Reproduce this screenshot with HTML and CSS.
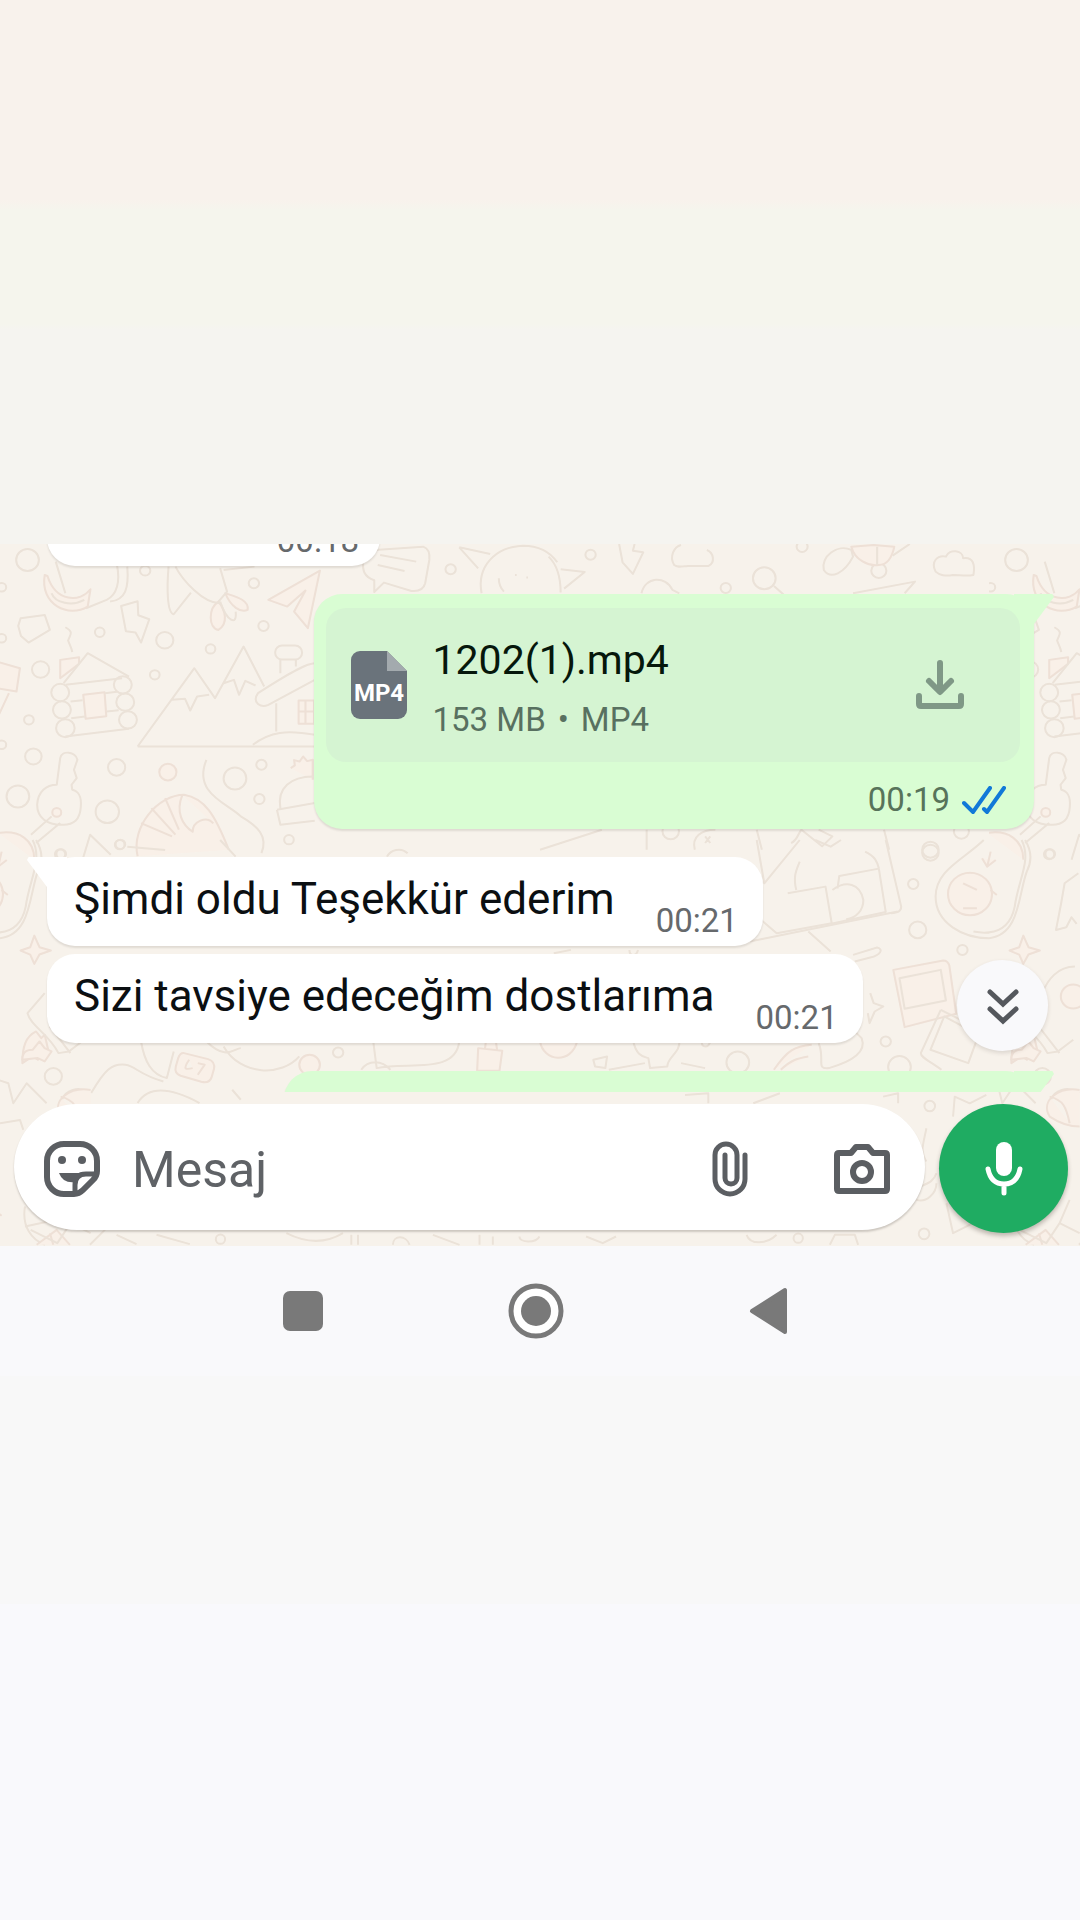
FILE: index.html
```html
<!DOCTYPE html>
<html lang="tr">
<head>
  <meta charset="UTF-8">
  <meta name="viewport" content="width=device-width, initial-scale=1.0">
  <title>Sohbet</title>
  <link rel="stylesheet" href="styles.css">
</head>
<body>
  <div class="top-space"></div>

  <main class="chat">
    <!-- Doodle wallpaper, repeats sideways -->
    <svg class="wallpaper" aria-hidden="true">
      <defs>
        <g id="doodles">
          <g transform="translate(0 -14) scale(.344 .333)">
            <circle cx="80" cy="90" r="33"/><circle cx="5" cy="172" r="13"/><circle cx="422" cy="122" r="15"/>
            <circle cx="738" cy="160" r="15"/><circle cx="766" cy="288" r="15"/><circle cx="290" cy="307" r="14"/>
            <circle cx="479" cy="331" r="25"/><circle cx="612" cy="357" r="14"/><circle cx="118" cy="419" r="25"/>
            <circle cx="450" cy="435" r="14"/><circle cx="5" cy="325" r="13"/><circle cx="84" cy="570" r="14"/>
            <circle cx="97" cy="680" r="24"/><circle cx="339" cy="713" r="25"/><circle cx="488" cy="727" r="25" class="warm"/>
            <circle cx="683" cy="746" r="33"/><circle cx="760" cy="705" r="15"/><circle cx="754" cy="808" r="15"/>
            <circle cx="52" cy="800" r="33"/><circle cx="312" cy="846" r="34"/><circle cx="840" cy="930" r="14"/>
            <circle cx="350" cy="944" r="14"/><circle cx="5" cy="645" r="13"/><circle cx="1310" cy="118" r="15"/>
            <path d="M162 95l28 95M340 105c10 50 0 90-30 105l-60 25M370 110c5 65-5 100-50 105"/>
            <path class="warm" d="M130 135c-15 90 70 130 125 95l8-52c-30 40-100 40-125-40z"/>
            <path d="M150 190c10 30 60 40 95 20M60 265l70-10 15 45-62 38-22-20-8-30z"/>
            <path d="M352 228l48-14 2 42 32 12-24 70-16-30-28-4z"/>
            <path class="warm" d="M635 215c-30 20-30 80 0 85 30-20 20-60 0-85zM655 190c30 10 70 20 65 50-20 10-50-10-65-50z"/>
            <path d="M490 110c-5 60-5 140 15 143l50-65M510 110c20 40 80 110 130 110M640 115l20 70-25 30M650 120l90-10M640 215c20 60 50 75 45 30"/>
            <path class="warm" d="M780 210L930 122 895 295 855 245 888 182 835 230z"/>
            <path d="M1090 60l140-10c15 5 20 20 18 40l-12 70c-5 20-20 25-40 23l-80-25-28 28v-35c-30-10-35-30-32-60zM1105 75l105 20M1098 105l78 18"/>
            <path d="M1400 190c-15-80 40-140 120-143 50 0 80 20 100 50M1335 52l90 20M1335 52l55 63M1450 145c0 20 5 30 15 40M1497 135h5M1530 143h5"/>
            <path d="M190 292c25 15 15 20 8 40 5 15 10 20 12 35"/>
            <path class="warm" d="M175 445v-55l55-8 0 20zM242 495l62-8 5 72-60 8z"/>
            <path d="M185 460l70-90 120 70M190 465l165-20M190 620l185-23M205 515l35-4M305 490l35-4M207 565l40-5M310 545l35-4"/>
            <circle cx="175" cy="488" r="26"/><circle cx="180" cy="540" r="26"/><circle cx="190" cy="595" r="27"/>
            <circle cx="357" cy="465" r="26"/><circle cx="364" cy="517" r="26"/><circle cx="372" cy="570" r="26"/>
            <path class="warm" d="M-10 395l68 20-10 70-58-10M-10 570l36-80"/>
            <path d="M400 650L565 415l60 90 83-155 60 120M400 650h520M500 510l38-3 15 35 20-42 35-5M650 460l30-10 15 45 18-42 30 14"/>
            <rect x="800" y="347" width="78" height="42" rx="20"/>
            <path d="M815 390v40M860 390v20M915 400c-20 0-60 20-165 90-20 30 10 45 30 35l135-75M803 520v85M735 645c50-40 100-45 180-30"/>
            <path class="warm" d="M868 512h45v70h-45zM868 545h45M888 512v70"/>
            <path d="M165 765l10-80c5-25 45-20 50 5l-10 30 8 25-15 20 2 15c20 5 27 20 25 50-2 40-20 57-57 55-40 0-70-20-70-60 2-40 27-60 57-60zM150 860l-60 55M175 880l-70 60"/>
            <circle cx="165" cy="848" r="13" class="warm"/>
            <path class="warm" d="M-5 910c60-10 105 20 105 80"/>
            <path d="M240 990l22-75 60 60"/>
            <path class="warm" d="M400 980c-20-90 60-185 135-185 60 10 90 60 130 165M410 880l90 40M440 835l70 80M480 805l40 95M530 796c-20 50 0 90 30 110 0-30 40-50 60-25"/>
            <path d="M600 690c-40 100 60 130 100 170 50 30 80 60 60 110"/>
            <path class="warm" d="M845 715l12-8-2-16 16 4 10-15 12 14 16-4v60"/>
            <path d="M815 835c-10-60 30-95 95-95M805 840l110-20M805 840l10 45 100-12"/>
          </g>

          <g transform="translate(540 -14) scale(.344 .333)">
            <circle cx="147" cy="74" r="15"/><circle cx="762" cy="50" r="16"/><circle cx="540" cy="174" r="15"/>
            <circle cx="652" cy="145" r="33"/><circle cx="985" cy="122" r="22"/><circle cx="380" cy="905" r="24"/>
            <circle cx="1225" cy="905" r="22"/><circle cx="1135" cy="960" r="24"/>
            <path d="M680 168l28 26M25 80c30 30 35 70 35 108M60 118l70 8-60 50M230 42l10 55 30 35 30-65-30-5 5-20"/>
            <path d="M410 45c-20 5-35 35-20 60 10 8 20 5 40 3h60c20-10 15-40-5-48M295 190c10-50 70-55 90-10l20 10"/>
            <path d="M1150 125c-15-30 5-50 30-45 10-25 50-20 50 5 30-5 35 20 30 50-20 5-40 0-60 0-20 5-40 0-50-10z"/>
            <path d="M905 60c-40-20-90 20-80 60 20 30 60 10 85-40z"/>
            <path class="warm" d="M905 50c10 40 50 60 80 55 30 0 40-30 45-55l-60-5z"/>
            <path d="M980 50v55M1075 42l-50 35M910 190l180-35-30 35"/>
            <path d="M0 960l180-60M310 900v60M450 960c-10-40 20-60 60-60M480 920l15 20M495 920l-15 20M630 900l15 60M730 940c20-10 20-30 30-40l60 50 30-30-40-20M1000 900l15 60"/>
          </g>

          <g transform="translate(0 296) scale(.344 .333)">
            <circle cx="155" cy="710" r="25"/><circle cx="983" cy="638" r="15"/><circle cx="348" cy="14" r="14"/>
            <circle cx="178" cy="42" r="14"/><circle cx="900" cy="675" r="30" class="warm"/>
            <path d="M370 20l110 10M640 0l45 50M1125 50c10-20 40-30 60-10"/>
            <path d="M410 605c10 60 30 100 75 110l20-80M265 760c40-70 60-90 100-85 30 5 40 30 110 50M600 605c60 60 80 20 100 20M650 620c50 90 170 90 220 30M180 780c10-30 50-40 70-25M400 790c30-50 90-50 180 0"/>
            <path class="warm" d="M535 640l70 18c15 5 20 15 17 30l-7 25c-5 15-15 17-30 13l-60-18c-13-5-17-15-14-28l7-25c4-12 8-16 17-15zM550 660c-20 30-10 30 10 25M575 670l20 5-20 30"/>
            <path class="warm" d="M1390 625l70 8-8 60h-65zM1410 625l3-25h28l4 30"/>
            <path d="M1085 605l10 80c90-20 230 20 240-80M1050 690c20-30 60-30 85 0M675 750l25 30"/>
            <path class="warm" d="M65 670c0-50 10-80 40-95l15 20 10-10 10 45-30 30-15-10z"/>
            <path d="M130 460l-50 60c10 40 60 60 90 120l30-5 45-35"/>
          </g>

          <g transform="translate(540 296) scale(.344 .333)">
            <circle cx="1135" cy="38" r="24"/><circle cx="1085" cy="132" r="15"/><circle cx="1098" cy="270" r="25"/>
            <circle cx="1228" cy="330" r="15"/><circle cx="575" cy="668" r="33"/><circle cx="1005" cy="605" r="15"/>
            <circle cx="1045" cy="682" r="33"/><circle cx="1480" cy="43" r="15"/><circle cx="1550" cy="470" r="36" class="warm"/>
            <path d="M1290 0c-60 60-140 90-140 170 0 80 80 125 155 125 90-10 85-130 110-200 20-40 10-70-5-95M1400 0c30 60-10 120-20 200-10 50-40 90-120 75"/>
            <circle cx="1250" cy="162" r="64" class="warm"/>
            <path class="warm" d="M1285 55l15 25 25-20M1300 80l10-45M1230 130l40 20M1230 205h40M1310 150l18 15"/>
            <path d="M630 0l22 130L755 0M745 150c-10-40 0-60 10-85M720 160l110-20 18 110-160 30-45-40M865 145l5-37 115-22 20 130-155 35M850 150c40-30 80-20 90 30 0 30-20 55-50 58M945 35c30 15 35 30 40 50M1005 0l45 200c0 15-10 18-30 20M800 0l45 20 30-20"/>
            <path d="M610 305l430-90M780 275l65 60M910 345l70-22c20 5 10 22-20 30l-45 12M40 340l50-10M260 330c0 20 20 20 25 0"/>
            <path class="warm" d="M1405 287l15 35 33 10-33 12-15 28-12-28-28-12 28-10z"/>
            <path d="M960 460l10 30 28 10-25 15-15 35-5-30"/>
            <path class="warm" d="M1027 390l145-28c10 0 15 5 18 15l20 145-150 40z"/>
            <path d="M1045 415l120-25 15 92-120 25zM1175 530l100 55-30 85-110-40z"/>
            <path d="M1165 510l-58 130c0 15 30 25 60 50M1165 510l125 65M1565 100l-40 30-10 60-15 80 30-8 15-30 15 20M1555 380c-50 0-80 40-95 80M1450 560l60 80"/>
            <path class="warm" d="M1370 660c0-30 20-30 30-30l20-25 15 20 20 10-20 30-20-10zM0 605c10 60 90 70 108 0"/>
            <path d="M270 600c10 50 30 50 45 55l5 30 50-5c0-30 40-40 35-80M200 690l105-20M410 670l70 15M155 660l40-10-5 35-30-5zM470 605c0 20 20 20 25 0"/>
            <path class="warm" d="M680 690c40-60 60-70 110-75M700 690c30-30 50-35 80-40"/>
            <path d="M810 610c20 50-10 80 30 75 70-20 110-50 95-90l-15-15"/>
          </g>

          <g transform="translate(680 516) scale(.333)">
            <circle cx="750" cy="138" r="16"/><circle cx="733" cy="522" r="16"/><circle cx="355" cy="535" r="14"/>
            <path d="M15 105l70-5v30M220 130l80-30M610 110l45-10v30M820 170l5-60 45 20 50-25M740 205c-10 50-20 70 0 100M700 390c40-20 60-20 70-50M710 420c30 10 60-20 60-50M800 430l20 90 60-30"/>
            <path class="warm" d="M1200 90c-60-10-120 30-90 80 30 20 60 30 90 30M1110 110c40 10 50 30 60 80"/>
            <path d="M1020 510l80 40 40-60 60 30M1140 490l30-70M450 555l15-30h60l10 30M200 525c10 30 60 30 90 0"/>
          </g>
          <g transform="translate(0 516) scale(.333)">
            <circle cx="662" cy="538" r="14"/>
            <path d="M-5 60l30 10 15 60 40-60 60 60M0 190l60-10 10 30M75 440c-10 60 20 100 60 115M75 500l70-15M270 555l50-50M350 525l60 28M470 525l100 28M860 520c60 30 120 30 170 0M1055 555v-30M1075 555v-30"/>
            <path class="warm" d="M110 555l60-45 40 45M150 520l10 35M-5 460l10 8"/>
            <path d="M1180 555c0-30 40-30 50 0M1300 525l80 30M1440 525v30M1480 530v25M1560 530c0 20 50 20 60 0M1760 530l50 20 40-20"/>
          </g>
        </g>
        <pattern id="wall" width="989" height="702" patternUnits="userSpaceOnUse">
          <use href="#doodles"/>
          <use href="#doodles" x="-989"/>
        </pattern>
      </defs>
      <rect class="wall-fill" width="100%" height="100%" fill="url(#wall)"/>
    </svg>

    <div class="messages">
      <div class="bubble in first">
        <time>00:18</time>
      </div>

      <div class="bubble out tail start">
        <div class="file">
          <svg class="file-icon" viewBox="0 0 56 68" aria-hidden="true">
            <path fill="#6a737b" d="M9 0h27l20 20v39a9 9 0 0 1-9 9H9a9 9 0 0 1-9-9V9a9 9 0 0 1 9-9z"/>
            <path fill="#a3aaae" d="M36 0l20 20H36z"/>
            <text x="28" y="50" text-anchor="middle">MP4</text>
          </svg>
          <div class="file-info">
            <div class="file-name">1202(1).mp4</div>
            <div class="file-meta"><span>153 MB</span><span>•</span><span>MP4</span></div>
          </div>
          <button class="download" aria-label="İndir">
            <svg viewBox="0 0 48 50" fill="none" stroke="#7f9886" stroke-width="6" stroke-linecap="round" stroke-linejoin="round">
              <path d="M24 3v28M13 21l11 11 11-11M3 36v8q0 2 2 2h38q2 0 2-2v-8"/>
            </svg>
          </button>
        </div>
        <div class="status">
          <time>00:19</time>
          <svg class="ticks" viewBox="0 0 44 28" fill="none" stroke="#1179d8" stroke-width="4" stroke-linecap="round" aria-label="Okundu">
            <path d="M2 17l9 9L28 2M22 23l3 3L42 2"/>
          </svg>
        </div>
      </div>

      <div class="bubble in tail start">
        <p>Şimdi oldu Teşekkür ederim</p>
        <time>00:21</time>
      </div>
      <div class="bubble in">
        <p>Sizi tavsiye edeceğim dostlarıma</p>
        <time>00:21</time>
      </div>

      <div class="bubble out tail start next"></div>

      <button class="scroll-down" aria-label="En alta git">
        <svg viewBox="0 0 34 38" fill="none" stroke="#55585d" stroke-width="5" stroke-linecap="round" stroke-linejoin="miter">
          <path d="M4 5l13 12L30 5M4 22l13 12 13-12"/>
        </svg>
      </button>
    </div>

    <form class="composer">
      <div class="field">
        <button type="button" aria-label="Çıkartma">
          <svg class="i-sticker" viewBox="0 0 56 56">
            <path fill="none" stroke="#5b5e62" stroke-width="6" stroke-linejoin="round" d="M20 3h16a17 17 0 0 1 17 17v10q0 5-4 9L39 49q-4 4-9 4H20A17 17 0 0 1 3 36V20A17 17 0 0 1 20 3z"/>
            <path fill="none" stroke="#5b5e62" stroke-width="5" d="M31 52v-8q0-11 11-11h11"/>
            <circle cx="18" cy="19" r="4" fill="#5b5e62"/><circle cx="38" cy="19" r="4" fill="#5b5e62"/>
            <path fill="#5b5e62" d="M15 32h25l-8 9q-13 2-17-9z"/>
          </svg>
        </button>
        <input type="text" placeholder="Mesaj" aria-label="Mesaj">
        <button type="button" aria-label="Dosya ekle">
          <svg class="i-clip" viewBox="0 0 36 56" fill="none" stroke="#5b5e62" stroke-width="5" stroke-linecap="round">
            <path d="M33 14v24a15 15 0 0 1-30 0V14a11 11 0 0 1 22 0v23a6 6 0 0 1-12 0V14"/>
          </svg>
        </button>
        <button type="button" aria-label="Kamera">
          <svg class="i-camera" viewBox="0 0 56 50" fill="none" stroke="#5b5e62" stroke-width="6" stroke-linejoin="round">
            <path d="M5 9h12l5-6h12l5 6h12q2 0 2 2v34q0 2-2 2H5q-2 0-2-2V11q0-2 2-2z"/>
            <circle cx="28" cy="28" r="9"/>
          </svg>
        </button>
      </div>
      <button type="button" class="mic" aria-label="Sesli mesaj">
        <svg viewBox="0 0 38 54">
          <rect x="11" y="0" width="16" height="34" rx="8" fill="#fff"/>
          <path fill="none" stroke="#fff" stroke-width="5" stroke-linecap="round" d="M3 27c2 10 8 15 16 15s14-5 16-15M19 42v9"/>
        </svg>
      </button>
    </form>
  </main>

  <nav class="system-nav">
    <button aria-label="Son uygulamalar">
      <svg viewBox="0 0 56 56"><rect x="8" y="8" width="40" height="40" rx="7" fill="#797979"/></svg>
    </button>
    <button aria-label="Ana ekran">
      <svg viewBox="0 0 56 56"><circle cx="28" cy="28" r="25" fill="#fff" stroke="#797979" stroke-width="5"/><circle cx="28" cy="28" r="15" fill="#797979"/></svg>
    </button>
    <button aria-label="Geri">
      <svg viewBox="0 0 56 56"><path fill="#797979" stroke="#797979" stroke-width="4" stroke-linejoin="round" d="M11 28L44 7v42z"/></svg>
    </button>
  </nav>
  <div class="bottom-space"></div>
</body>
</html>
```

FILE: styles.css
```css
* {
  box-sizing: border-box;
}

body {
  display: flex;
  flex-direction: column;
  min-height: 100vh;
  margin: 0;
  background: #f9f9fc;
  font-family: Roboto, sans-serif;
}

button {
  display: flex;
  flex-shrink: 0;
  align-items: center;
  justify-content: center;
  padding: 0;
  border: 0;
  background: none;
  cursor: pointer;
}

.top-space {
  height: 544px;
  background: linear-gradient(#f8f2ec 200px, #f5f5ed 210px, #f5f5ed 324px, #f5f4f0 330px);
}

/* Chat */
.chat {
  position: relative;
  background: #f7f2eb;
}

.wallpaper {
  position: absolute;
  top: 0;
  left: 0;
  width: 100%;
  height: 100%;
  fill: none;
  stroke: #ebe2d8;
  stroke-width: 6;
  stroke-linejoin: round;
}

.wallpaper .warm {
  fill: #f9f0e8;
  stroke: #eee0d6;
}

.wallpaper .wall-fill {
  stroke: none;
}

.messages {
  position: relative;
  display: flex;
  flex-direction: column;
  height: 548px;
  padding: 0 46px 0 47px;
  overflow: hidden;
}

.bubble {
  position: relative;
  display: flex;
  flex-shrink: 0;
  align-items: flex-end;
  margin-top: 8px;
  border-radius: 28px;
  box-shadow: 0 2px 2px rgba(60, 50, 40, 0.12);
}

.bubble.start {
  margin-top: 28px;
}

.bubble.in {
  align-self: flex-start;
  gap: 41px;
  padding: 16px 25px 6px 27px;
  background: #fff;
}

.bubble.out {
  flex-direction: column;
  align-self: flex-end;
  width: 73%;
  padding: 14px 14px 10px 12px;
  background: #d9fdd3;
}

.bubble.tail::before {
  content: "";
  position: absolute;
  top: 0;
  width: 40px;
  height: 30px;
  background: inherit;
}

.bubble.in.tail::before {
  left: -20px;
  clip-path: polygon(4% 0, 100% 0, 100% 100%, 50% 100%, 0 10%);
}

.bubble.out.tail::before {
  right: -20px;
  clip-path: polygon(0 0, 96% 0, 100% 10%, 50% 100%, 0 100%);
}

.bubble p {
  margin: 0 0 15px;
  color: #0b0f12;
  font-size: 44px;
  line-height: 52px;
}

.bubble time {
  color: #66696c;
  font-size: 33px;
  line-height: 38px;
}

.bubble.first {
  justify-content: flex-end;
  width: 333px;
  margin-top: -66px;
  padding-right: 21px;
}

.bubble.first time {
  margin-top: 28px;
}

.bubble.next {
  width: 76%;
  height: 90px;
}

/* File message */
.file {
  position: relative;
  display: flex;
  align-items: center;
  width: 100%;
  height: 154px;
  padding: 0 56px 0 25px;
  border-radius: 20px;
  background: #d5f4d2;
}

.file-icon {
  width: 56px;
  height: 68px;
}

.file-icon text {
  fill: #fff;
  font-size: 24px;
  font-weight: 700;
}

.file-info {
  flex: 1;
  margin-left: 26px;
  padding-top: 10px;
}

.file-name {
  color: #06170b;
  font-size: 41px;
  line-height: 60px;
}

.file-meta {
  display: flex;
  gap: 12px;
  color: #587060;
  font-size: 33px;
  line-height: 60px;
}

.download svg {
  width: 48px;
  height: 50px;
}

.status {
  display: flex;
  align-items: center;
  gap: 12px;
  margin-top: 19px;
  padding-right: 14px;
}

.bubble .status time {
  color: #57735a;
}

.ticks {
  width: 44px;
  height: 28px;
}

.scroll-down {
  position: absolute;
  right: 32px;
  bottom: 41px;
  width: 91px;
  height: 91px;
  border-radius: 50%;
  background: #f9f9fb;
  box-shadow: 0 2px 4px rgba(60, 50, 40, 0.15);
}

.scroll-down svg {
  width: 34px;
  height: 38px;
}

/* Composer */
.composer {
  position: relative;
  display: flex;
  gap: 14px;
  padding: 12px 12px 13px 14px;
}

.field {
  display: flex;
  flex: 1;
  align-items: center;
  min-width: 0;
  height: 126px;
  padding: 4px 35px 0 30px;
  border-radius: 63px;
  background: #fff;
  box-shadow: 0 2px 2px rgba(60, 50, 40, 0.22);
}

.field input {
  flex: 1;
  min-width: 0;
  margin: 0 30px 0 32px;
  padding: 2px 0 0;
  border: 0;
  outline: 0;
  background: none;
  color: #0b0f12;
  font-family: inherit;
  font-size: 50px;
}

.field input::placeholder {
  color: #5f6266;
  opacity: 1;
}

.i-sticker {
  width: 56px;
  height: 56px;
}

.i-clip {
  width: 36px;
  height: 56px;
}

.i-camera {
  width: 56px;
  height: 50px;
  margin-left: 86px;
}

.mic {
  width: 129px;
  height: 129px;
  border-radius: 50%;
  background: #1fac62;
  box-shadow: 0 3px 4px rgba(60, 50, 40, 0.3);
}

.mic svg {
  width: 38px;
  height: 54px;
}

/* Android navigation bar */
.system-nav {
  display: flex;
  align-items: center;
  justify-content: center;
  gap: 177px;
  height: 130px;
  padding-right: 8px;
  background: #f9f9fb;
}

.system-nav svg {
  width: 56px;
  height: 56px;
}

.bottom-space {
  height: 228px;
  background: #f8f8f8;
}
```
